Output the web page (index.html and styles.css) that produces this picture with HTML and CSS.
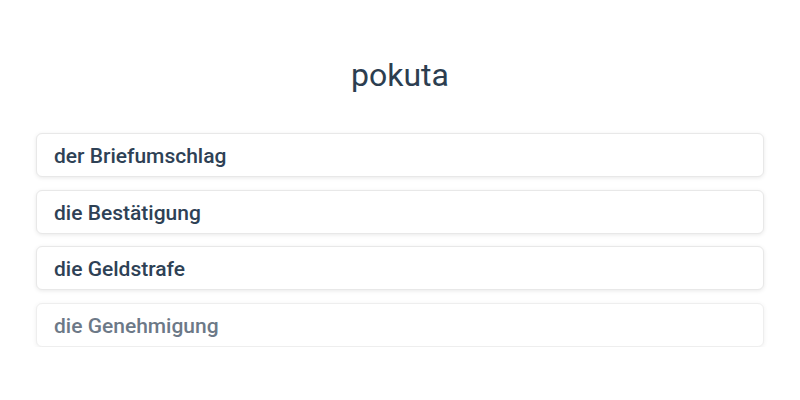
FILE: index.html
```html
<!DOCTYPE html>
<html>
<head>
<meta charset="utf-8">
<link rel="stylesheet" href="styles.css">
</head>
<body>
<main class="quiz">
  <h1 class="word">pokuta</h1>
  <ul class="options">
    <li class="option">der Briefumschlag</li>
    <li class="option">die Bestätigung</li>
    <li class="option">die Geldstrafe</li>
    <li class="option option--fading">die Genehmigung</li>
  </ul>
</main>
</body>
</html>
```
FILE: styles.css
```css
html, body {
  margin: 0;
  padding: 0;
  background: #ffffff;
}
body {
  font-family: Roboto, "Noto Sans", sans-serif;
  color: #2c3e50;
}
.quiz {
  padding: 56px 36px 0;
}
.word {
  margin: 0;
  text-align: center;
  font-size: 32px;
  font-weight: 400;
  line-height: 38px;
  color: #2c3e50;
}
.options {
  list-style: none;
  margin: 39px 0 0;
  padding: 0;
  display: flex;
  flex-direction: column;
  gap: 12.67px;
}
.option {
  box-sizing: border-box;
  height: 44px;
  display: flex;
  align-items: center;
  padding: 2px 17px 0;
  border: 1px solid #e8e8e8;
  border-radius: 6px;
  box-shadow: 0 1px 4px rgba(0,0,0,0.09);
  font-size: 21px;
  font-weight: 500;
  color: #2e4155;
  background: #fff;
}
.option--fading {
  opacity: 0.7;
}
```
